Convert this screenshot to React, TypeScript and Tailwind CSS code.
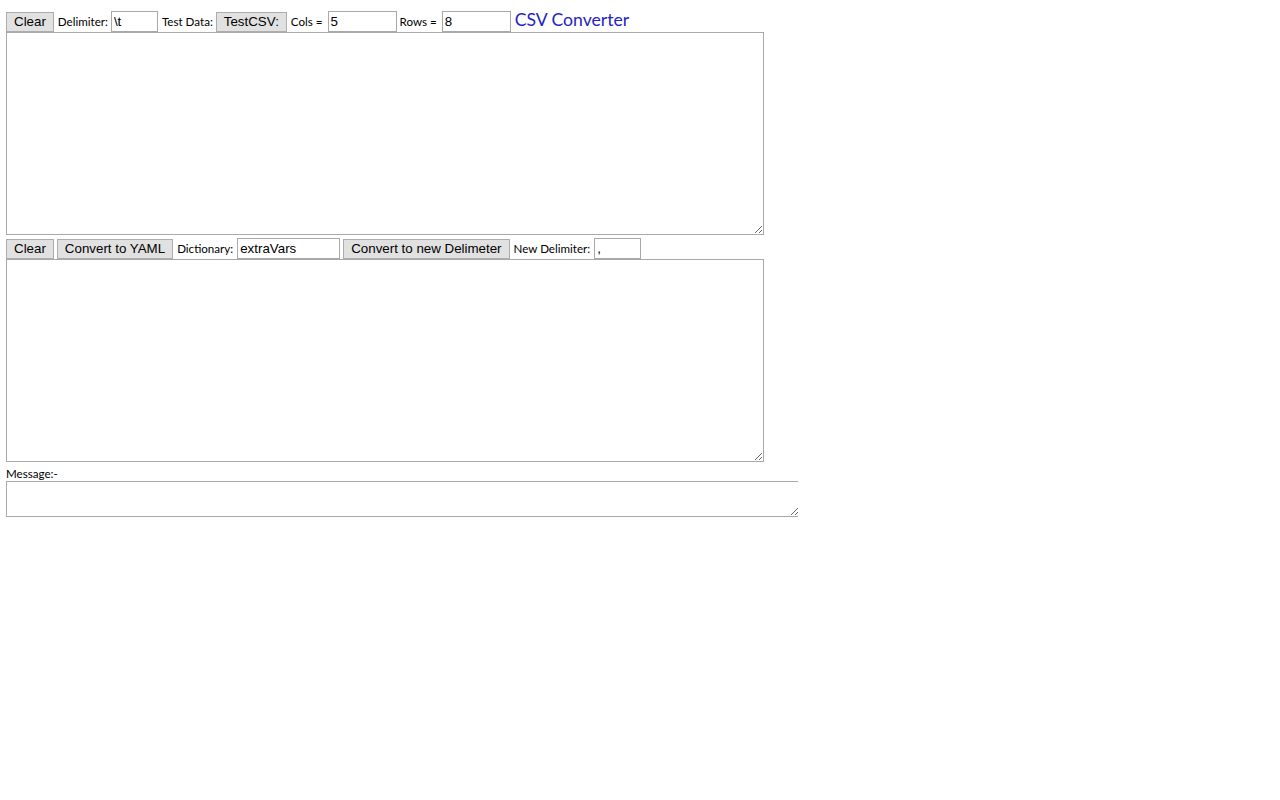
import { useState } from 'react';

const btn =
    'h-[20px] px-[7px] bg-[#e1e1e1] border border-[#adadad] text-[13.33px] leading-none text-black font-["Liberation_Sans",Arial,sans-serif]';
const field =
    'h-[21px] px-[2px] border border-[#a9a9a9] bg-white text-[13.33px] text-black font-["Liberation_Sans",Arial,sans-serif] outline-none';
const label = 'text-[11.6px] text-black font-["Lato","Noto_Sans",sans-serif] leading-none';
const area = 'block border border-[#a9a9a9] bg-white outline-none resize';

const App = () => {
    const [delim, setDelim] = useState('\\t');
    const [cols, setCols] = useState('5');
    const [rows, setRows] = useState('8');
    const [dict, setDict] = useState('extraVars');
    const [newDelim, setNewDelim] = useState(',');

    return (
        <div className="min-h-screen bg-white pl-[6px] pt-[5px]">
            <div className="flex items-end gap-[3px] h-[27px]">
                <button className={btn}>Clear</button>
                <span className={`${label} ml-[1px] mb-[4px]`}>Delimiter:</span>
                <input className={`${field} w-[47px]`} value={delim} onChange={e => setDelim(e.target.value)} />
                <span className={`${label} ml-[1px] mb-[4px]`}>Test Data:</span>
                <button className={btn}>TestCSV:</button>
                <span className={`${label} ml-[1px] mb-[4px]`}>Cols =</span>
                <input className={`${field} w-[69px] ml-[2px]`} value={cols} onChange={e => setCols(e.target.value)} />
                <span className={`${label} mb-[4px]`}>Rows =</span>
                <input className={`${field} w-[69px] ml-[2px]`} value={rows} onChange={e => setRows(e.target.value)} />
                <span className='ml-[1px] text-[17.6px] leading-[24px] text-[#2323c6] font-["Lato","Noto_Sans",sans-serif]'>
                    CSV Converter
                </span>
            </div>
            <textarea className={`${area} w-[758px] h-[203px]`} />

            <div className="flex items-center gap-[3px] mt-[3px] h-[21px]">
                <button className={btn}>Clear</button>
                <button className={btn}>Convert to YAML</button>
                <span className={`${label} ml-[1px]`}>Dictionary:</span>
                <input className={`${field} w-[103px] ml-[1px]`} value={dict} onChange={e => setDict(e.target.value)} />
                <button className={btn}>Convert to new Delimeter</button>
                <span className={`${label} ml-[1px]`}>New Delimiter:</span>
                <input className={`${field} w-[47px] ml-[1px]`} value={newDelim} onChange={e => setNewDelim(e.target.value)} />
            </div>
            <textarea className={`${area} w-[758px] h-[203px]`} />

            <div className={`${label} mt-[6px] h-[13px]`}>Message:-</div>
            <div className="w-[792px] overflow-hidden">
                <textarea className={`${area} w-[794px] h-[36px]`} />
            </div>
        </div>
    );
};

export default App;
